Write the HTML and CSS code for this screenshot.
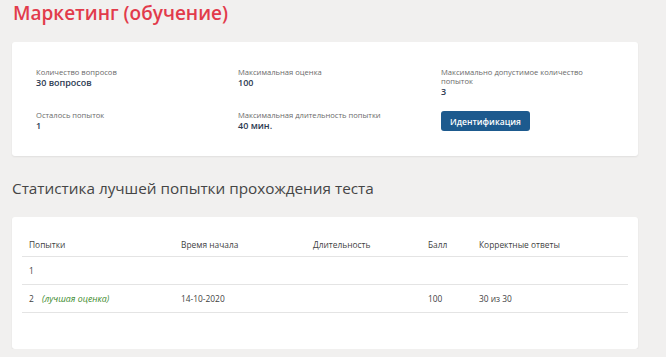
FILE: index.html
```html
<!DOCTYPE html>
<html>
<head>
  <meta charset="UTF-8">
  <title>Маркетинг (обучение)</title>
  <link rel="stylesheet" href="styles.css">
</head>
<body>
  <div class="page">
    <!-- Заголовок теста -->
    <h1 class="test-title">Маркетинг (обучение)</h1>

    <!-- Информация о тесте -->
    <div class="card info-card">
      <div class="info-grid">
        <div class="info-item">
          <div class="info-label">Количество вопросов</div>
          <div class="info-value">30 вопросов</div>
        </div>
        <div class="info-item">
          <div class="info-label">Максимальная оценка</div>
          <div class="info-value">100</div>
        </div>
        <div class="info-item">
          <div class="info-label">Максимально допустимое количество попыток</div>
          <div class="info-value">3</div>
        </div>
        <div class="info-item">
          <div class="info-label">Осталось попыток</div>
          <div class="info-value">1</div>
        </div>
        <div class="info-item">
          <div class="info-label">Максимальная длительность попытки</div>
          <div class="info-value">40 мин.</div>
        </div>
        <div class="info-item">
          <button class="ident-button">Идентификация</button>
        </div>
      </div>
    </div>

    <!-- Статистика -->
    <h2 class="section-title">Статистика лучшей попытки прохождения теста</h2>

    <div class="card stats-card">
      <table class="stats-table">
        <thead>
          <tr>
            <th class="col-try">Попытки</th>
            <th class="col-start">Время начала</th>
            <th class="col-dur">Длительность</th>
            <th class="col-score">Балл</th>
            <th>Корректные ответы</th>
          </tr>
        </thead>
        <tbody>
          <tr>
            <td>1</td>
            <td></td>
            <td></td>
            <td></td>
            <td></td>
          </tr>
          <tr>
            <td>2 <span class="best-mark">(лучшая оценка)</span></td>
            <td>14-10-2020</td>
            <td></td>
            <td>100</td>
            <td>30 из 30</td>
          </tr>
        </tbody>
      </table>
    </div>
  </div>
</body>
</html>
```

FILE: styles.css
```css
body {
  margin: 0;
  padding: 0;
  font-family: "Open Sans", "Noto Sans", sans-serif;
  background-color: #f1f0ef;
  color: #444;
}

.page {
  padding: 0 28px 0 12px;
}

/* Заголовок */
.test-title {
  margin: 0;
  padding: 0 0 0 1px;
  height: 42px;
  line-height: 26px;
  font-size: 19px;
  font-weight: 600;
  color: #e23b4b;
}

.card {
  background-color: #fff;
  border-radius: 3px;
  box-shadow: 0 1px 2px rgba(0, 0, 0, 0.07);
}

/* Информация о тесте */
.info-card {
  padding: 26px 0 25px 24px;
}

.info-grid {
  display: grid;
  grid-template-columns: 202px 203px 150px;
  row-gap: 14px;
}

.info-label {
  font-size: 7.6px;
  line-height: 9px;
  color: #6a6a6a;
}

.info-value {
  font-size: 9px;
  line-height: 11px;
  font-weight: 600;
  color: #2c3a52;
}

.ident-button {
  display: block;
  width: 89px;
  height: 20px;
  padding: 0;
  border: none;
  border-radius: 3px;
  background-color: #1d5a8e;
  color: #fff;
  font-family: inherit;
  font-size: 8.5px;
  font-weight: 600;
  cursor: pointer;
}

/* Статистика */
.section-title {
  margin: 20px 0 0 0;
  height: 41px;
  line-height: 24px;
  font-size: 15.3px;
  font-weight: 400;
  color: #454545;
}

.stats-card {
  padding: 16px 10px 36px 10px;
}

.stats-table {
  width: 100%;
  border-collapse: collapse;
  font-size: 8.4px;
  color: #3f3f3f;
}

.stats-table th {
  text-align: left;
  font-weight: 400;
  height: 23px;
  padding: 0 0 0 7px;
  border-bottom: 1px solid #e4e4e4;
}

.stats-table td {
  height: 27px;
  padding: 0 0 0 7px;
  border-bottom: 1px solid #e4e4e4;
}

.col-try { width: 145px; }
.col-start { width: 125px; }
.col-dur { width: 108px; }
.col-score { width: 44px; }

.best-mark {
  margin-left: 6px;
  font-size: 8.8px;
  font-style: italic;
  color: #3d8b2d;
}
```
